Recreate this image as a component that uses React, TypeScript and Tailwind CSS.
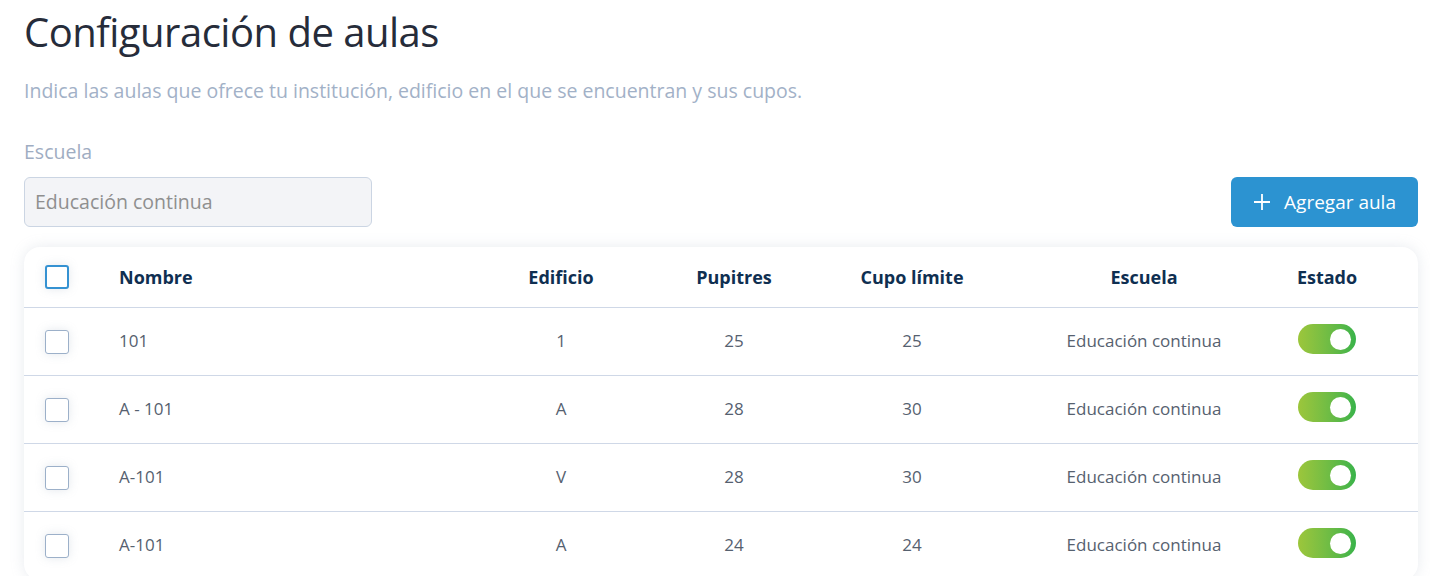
import React from "react";

const rows = [
  { nombre: "101", edificio: "1", pupitres: "25", cupo: "25", escuela: "Educación continua" },
  { nombre: "A - 101", edificio: "A", pupitres: "28", cupo: "30", escuela: "Educación continua" },
  { nombre: "A-101", edificio: "V", pupitres: "28", cupo: "30", escuela: "Educación continua" },
  { nombre: "A-101", edificio: "A", pupitres: "24", cupo: "24", escuela: "Educación continua" },
];

function Checkbox({ header }: { header?: boolean }) {
  return (
    <div
      className={
        "w-[24px] h-[24px] rounded-[3px] bg-white shadow-[0_0_10px_rgba(148,163,184,0.25)] " +
        (header ? "border-2 border-[#3592d2]" : "border border-[#9cb0c9]")
      }
    />
  );
}

function Toggle() {
  return (
    <div className="w-[58px] h-[30px] rounded-full bg-gradient-to-r from-[#9cc63b] to-[#37b34a] flex items-center justify-end pr-[5px]">
      <div className="w-[21px] h-[21px] rounded-full bg-white" />
    </div>
  );
}

const grid = "grid grid-cols-[95px_356px_172px_174px_182px_282px_84px_1fr] items-center";

export default function App() {
  return (
    <div className="min-h-[576px] bg-white pl-[24px] pr-[12px] pt-[8px]" style={{ fontFamily: '"Open Sans", "Noto Sans", sans-serif' }}>
      <h1 className="text-[40px] leading-[48px] text-[#262c3a] font-normal tracking-[-0.5px]">Configuración de aulas</h1>
      <p className="mt-[22px] text-[19.5px] leading-[26px] text-[#a2b1c7]">
        Indica las aulas que ofrece tu institución, edificio en el que se encuentran y sus cupos.
      </p>
      <div className="mt-[35px] text-[19.5px] leading-[26px] text-[#9fadc2]">Escuela</div>
      <div className="mt-[12px] flex items-center justify-between">
        <div className="w-[348px] h-[50px] rounded-[6px] border border-[#cbd5e3] bg-[#f3f4f7] flex items-center px-[10px] text-[19.5px] text-[#8f8f8f]">
          Educación continua
        </div>
        <button className="w-[187px] h-[50px] rounded-[6px] bg-[#2c93d1] text-white text-[19px] font-medium flex items-center justify-center gap-[13px]">
          <svg width="18" height="18" viewBox="0 0 18 18" fill="none" stroke="white" strokeWidth="1.8">
            <path d="M9 1v16M1 9h16" />
          </svg>
          <span>Agregar aula</span>
        </button>
      </div>
      <div className="mt-[20px] rounded-[16px] bg-white shadow-[0_0_14px_rgba(148,163,184,0.22)] overflow-hidden">
        <div className={grid + " h-[61px] border-b border-[#cfd8e7] text-[18px] font-bold text-[#0f2f51]"}>
          <div className="pl-[21px]"><Checkbox header /></div>
          <div>Nombre</div>
          <div className="text-center">Edificio</div>
          <div className="text-center">Pupitres</div>
          <div className="text-center">Cupo límite</div>
          <div className="text-center">Escuela</div>
          <div className="text-center">Estado</div>
          <div />
        </div>
        {rows.map((r, i) => (
          <div key={i} className={grid + " h-[68px] border-b border-[#cfd8e7] text-[17px] text-[#56616f]"}>
            <div className="pl-[21px]"><Checkbox /></div>
            <div className="pb-[2px]">{r.nombre}</div>
            <div className="text-center pb-[2px]">{r.edificio}</div>
            <div className="text-center pb-[2px]">{r.pupitres}</div>
            <div className="text-center pb-[2px]">{r.cupo}</div>
            <div className="text-center pb-[2px]">{r.escuela}</div>
            <div className="flex justify-center pb-[5px]"><Toggle /></div>
            <div />
          </div>
        ))}
      </div>
    </div>
  );
}
